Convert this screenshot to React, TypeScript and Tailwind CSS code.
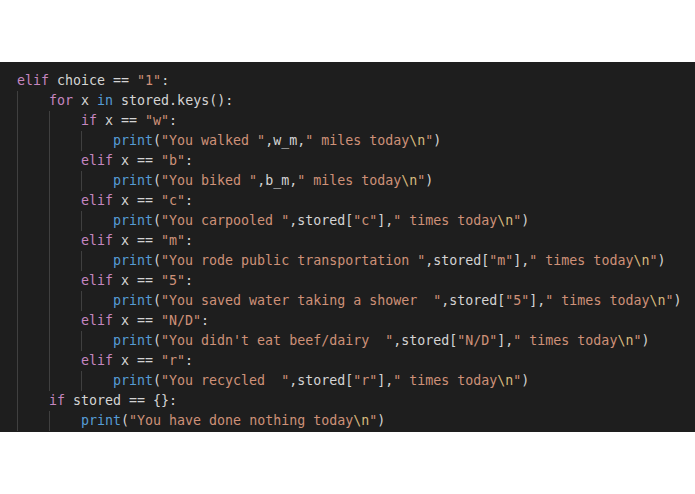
type Tok = [string, string];

const K = "text-[#c586c0]";
const B = "text-[#569cd6]";
const S = "text-[#ce9178]";
const E = "text-[#d7ba7d]";
const D = "text-[#d4d4d4]";

const str = (s: string): Tok[] => {
  // split out \n escapes so they get their own colour
  const parts = s.split("\\n");
  const out: Tok[] = [];
  parts.forEach((p, i) => {
    if (p) out.push([p, S]);
    if (i < parts.length - 1) out.push(["\\n", E]);
  });
  return out;
};

const printLine = (a: string, mid: Tok[], b: string): Tok[] => [
  ["print", B],
  ["(", D],
  ...str(a),
  ...mid,
  ...str(b),
  [")", D],
];

const stored = (k: string): Tok[] => [
  [",stored[", D],
  ...str(`"${k}"`),
  ["],", D],
];

const elif = (k: string): Tok[] => [
  ["elif", K],
  [" x == ", D],
  ...str(`"${k}"`),
  [":", D],
];

const lines: { level: number; toks: Tok[] }[] = [
  { level: 0, toks: [["elif", K], [" choice == ", D], ...str('"1"'), [":", D]] },
  { level: 1, toks: [["for", K], [" x ", D], ["in", B], [" stored.keys():", D]] },
  { level: 2, toks: [["if", K], [" x == ", D], ...str('"w"'), [":", D]] },
  { level: 3, toks: printLine('"You walked "', [[",w_m,", D]], '" miles today\\n"') },
  { level: 2, toks: elif("b") },
  { level: 3, toks: printLine('"You biked "', [[",b_m,", D]], '" miles today\\n"') },
  { level: 2, toks: elif("c") },
  { level: 3, toks: printLine('"You carpooled "', stored("c"), '" times today\\n"') },
  { level: 2, toks: elif("m") },
  { level: 3, toks: printLine('"You rode public transportation "', stored("m"), '" times today\\n"') },
  { level: 2, toks: elif("5") },
  { level: 3, toks: printLine('"You saved water taking a shower  "', stored("5"), '" times today\\n"') },
  { level: 2, toks: elif("N/D") },
  { level: 3, toks: printLine('"You didn\'t eat beef/dairy  "', stored("N/D"), '" times today\\n"') },
  { level: 2, toks: elif("r") },
  { level: 3, toks: printLine('"You recycled  "', stored("r"), '" times today\\n"') },
  { level: 1, toks: [["if", K], [" stored == {}:", D]] },
  { level: 2, toks: printLine('"You have done nothing today\\n"', [], "") },
];

const CodeLine = ({ level, toks }: { level: number; toks: Tok[] }) => (
  <div className="flex h-5 items-center">
    {Array.from({ length: level }).map((_, i) => (
      <span key={i} className="h-5 w-8 shrink-0 border-l border-[#404040]" />
    ))}
    <span className="whitespace-pre">
      {toks.map(([t, c], i) => (
        <span key={i} className={c}>
          {t}
        </span>
      ))}
    </span>
  </div>
);

export default function App() {
  return (
    <div className="h-[494px] w-[695px] overflow-hidden bg-white pt-[62px]">
      <div
        className="h-[370px] overflow-hidden bg-[#1e1e1e] pl-[17px] pt-[9px] text-[13.3px] leading-5"
        style={{ fontFamily: '"DejaVu Sans Mono", "Liberation Mono", monospace' }}
      >
        {lines.map((l, i) => (
          <CodeLine key={i} level={l.level} toks={l.toks} />
        ))}
      </div>
    </div>
  );
}
